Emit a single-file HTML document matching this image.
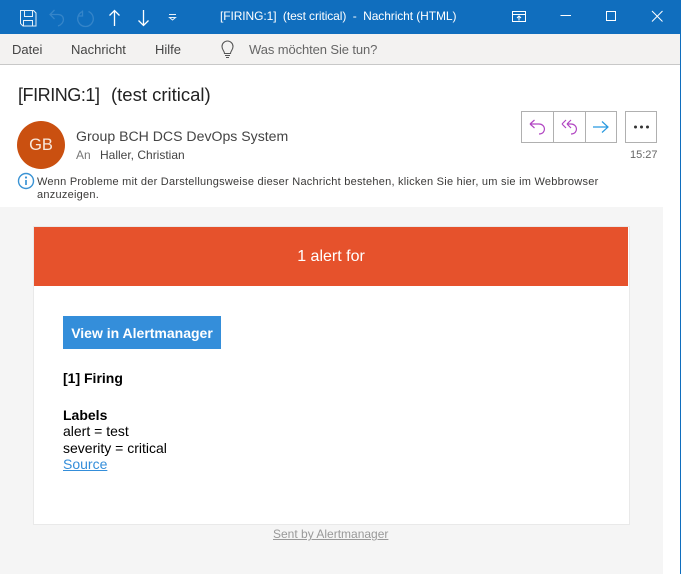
<!DOCTYPE html>
<html><head><meta charset="utf-8"><style>
html,body{margin:0;padding:0;background:#fff}
#r{position:relative;width:681px;height:574px;overflow:hidden;background:#fff;font-family:"Liberation Sans",sans-serif}
#r div,#r svg,#r a{position:absolute;white-space:nowrap}
.m{top:42px;font-size:13px;line-height:16px;color:#444}
</style></head><body><div id="r">
<div style="left:0;top:0;width:681px;height:34px;background:#106ebe"></div>
<div style="left:0;top:34px;width:681px;height:30px;background:#f3f2f1"></div>
<div style="left:0;top:64px;width:681px;height:1px;background:#c8c8c8"></div>
<div style="left:680px;top:0;width:1px;height:574px;background:#106ebe"></div>
<svg style="left:0;top:0" width="681" height="34" fill="none" stroke="#fff" stroke-width="1">
<path d="M20.500 10.500h13l2.500 2.500v13h-13l-2.500-2.500z M24.500 10.500v6h8v-6 M23.500 26v-5.500h9v5.500" stroke="#e6f0f8"/>
<path d="M54.500 10l-4.500 4.500 4.500 4.500 M50.500 14.500h7.500c7 0 7.500 9 0 11.500" stroke="#3585c9" stroke-width="1.300"/>
<path d="M82.500 10.500v5.500h-4.500 M82.500 11.500a7.800 7.800 0 1 0 6 0" stroke="#3585c9" stroke-width="1.300"/>
<path d="M114.500 26v-15.500 M109.500 15.500l5-5 5 5 M143.500 10v15.500 M138.500 20.500l5 5 5-5" stroke-width="1.300"/>
<path d="M169 14.500h7 M169.500 17.500h6l-3 2.500z" stroke="#e8f1f9"/>
<path d="M512.500 11.500h13v10h-13z M513 14.500h12 M519 20.500v-4.500 M517 18l2-2 2 2"/>
<path d="M560.500 15.500h10.500"/>
<rect x="606.500" y="11.500" width="9" height="9"/>
<path d="M652 11l10.500 10.500 M662.500 11l-10.500 10.500"/>
</svg>
<div style="left:220px;top:9px;font-size:12px;line-height:15px;color:#fff;letter-spacing:-.09px">[FIRING:1]&nbsp; (test critical)&nbsp; -&nbsp; Nachricht (HTML)</div>
<div class="m" style="left:12px">Datei</div>
<div class="m" style="left:71px">Nachricht</div>
<div class="m" style="left:155px">Hilfe</div>
<svg style="left:218px;top:40px" width="18" height="20" fill="none" stroke="#555" stroke-width="1.100"><path d="M6.500 13.500c0-2.500-2.500-3.500-2.500-7a5.500 5.500 0 0 1 11 0c0 3.500-2.500 4.500-2.500 7z M7 15.500h5 M8 17.500h3"/></svg>
<div class="m" style="left:249px;color:#666;letter-spacing:-.1px">Was möchten Sie tun?</div>

<div style="left:18px;top:84px;font-size:18px;line-height:22px;color:#222;letter-spacing:-.45px">[FIRING:1]</div>
<div style="left:111px;top:84px;font-size:18.500px;line-height:22px;color:#222">(test critical)</div>
<div style="left:17px;top:121px;width:48px;height:48px;border-radius:50%;background:#ca5010;color:#f8e8dd;font-size:16.500px;line-height:48px;text-align:center">GB</div>
<div style="left:76px;top:127px;font-size:14.100px;line-height:18px;color:#444">Group BCH DCS DevOps System</div>
<div style="left:76px;top:148px;font-size:12px;line-height:15px;color:#777">An</div>
<div style="left:100px;top:148px;font-size:12px;line-height:15px;color:#444">Haller, Christian</div>
<svg style="left:521px;top:111px" width="137" height="33" fill="none">
<path d="M.5.500h95v31h-95z M32.500.500v31 M64.500.500v31 M104.500.500h31v31h-31z" stroke="#b0b0b0"/>
<path d="M9 13h9c7 0 7.500 10 0 10 M9 13l4.500-4 M9 13l4.500 4" stroke="#b146c2" stroke-width="1.200"/>
<path d="M46 13h4c7 0 7.500 10 0 10 M41 13l4-4 M41 13l4 4 M46 13l4-4 M46 13l4 4" stroke="#b146c2" stroke-width="1.200"/>
<path d="M72 16h15 M81 10.500l6 5.500-6 5.500" stroke="#2899e0" stroke-width="1.200"/>
<circle cx="114.500" cy="16" r="1.500" fill="#333"/><circle cx="120.500" cy="16" r="1.500" fill="#333"/><circle cx="126.500" cy="16" r="1.500" fill="#333"/>
</svg>
<div style="left:630px;top:148px;font-size:11px;line-height:14px;color:#666">15:27</div>
<svg style="left:17px;top:172px" width="18" height="18" fill="none"><circle cx="9" cy="9" r="7.500" stroke="#3a93d4" stroke-width="1.400"/><path d="M9 8v5" stroke="#3a93d4" stroke-width="1.700"/><circle cx="9" cy="5.500" r="1.100" fill="#3a93d4"/></svg>
<div style="left:37px;top:175px;font-size:11px;line-height:14px;color:#3b3a39;letter-spacing:.245px">Wenn Probleme mit der Darstellungsweise dieser Nachricht bestehen, klicken Sie hier, um sie im Webbrowser</div>
<div style="left:37px;top:188px;font-size:11px;line-height:14px;color:#3b3a39;letter-spacing:.245px">anzuzeigen.</div>

<div style="left:0;top:207px;width:663px;height:367px;background:#f5f5f5"></div>
<div style="left:33px;top:226px;width:595px;height:297px;background:#fff;border:1px solid #e9e9e9"></div>
<div style="left:34px;top:227px;width:594px;height:59px;background:#e6522c;color:#fff;font-size:16px;line-height:59px;text-align:center">1 alert for</div>
<div style="left:63px;top:316px;width:158px;height:33px;background:#348eda;color:#fff;font-size:14px;font-weight:bold;line-height:35px;text-align:center">View in Alertmanager</div>
<div style="left:63px;top:370px;font-size:14px;font-weight:bold;line-height:17px;color:#000">[1] Firing</div>
<div style="left:63px;top:407px;font-size:14px;font-weight:bold;line-height:17px;color:#000">Labels</div>
<div style="left:63px;top:423px;font-size:14px;line-height:17px;color:#000">alert = test</div>
<div style="left:63px;top:440px;font-size:14px;line-height:17px;color:#000">severity = critical</div>
<a style="left:63px;top:456px;font-size:14px;line-height:17px;color:#348eda;text-decoration:underline">Source</a>
<div style="left:273px;top:527px;font-size:12px;line-height:14px;color:#999;text-decoration:underline">Sent by Alertmanager</div>
</div></body></html>
